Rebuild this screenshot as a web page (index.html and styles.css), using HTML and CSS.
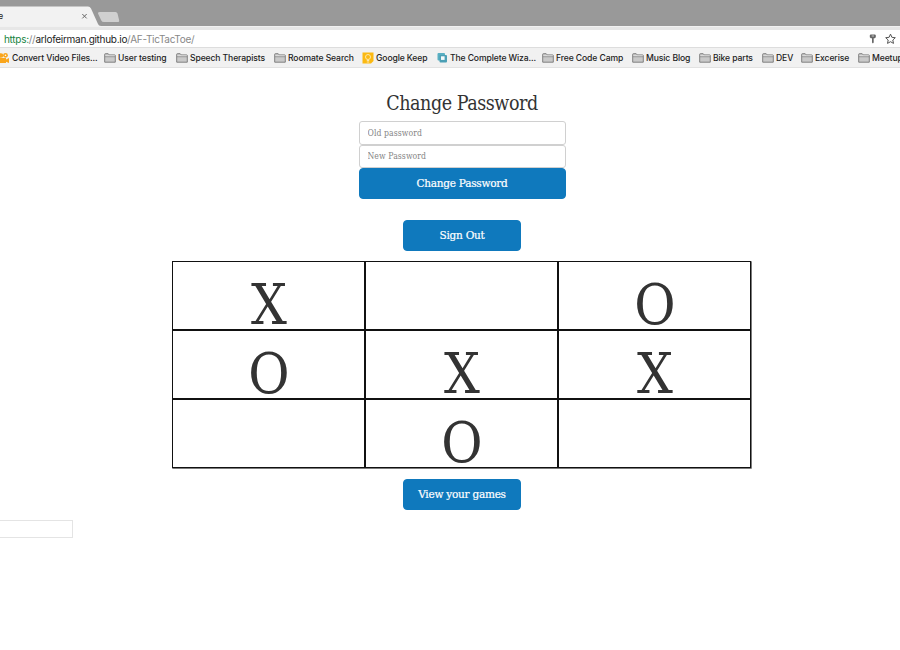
FILE: index.html
```html
<!DOCTYPE html>
<html lang="en">
<head>
<meta charset="utf-8">
<title>Tic Tac Toe</title>
<link rel="stylesheet" href="styles.css">
</head>
<body>
<svg class="defs" width="0" height="0">
  <symbol id="folder" viewBox="0 0 12 10"><path d="M.7 9.2V1.3Q.7.7 1.3.7H4.2L5.2 1.9H10.7Q11.3 1.9 11.3 2.5V9.2Z" fill="#c9c9c9" stroke="#777" stroke-width=".9"/><path d="M.9 3.7H11.1" stroke="#777" stroke-width=".8"/><path d="M1.3 2.8H10.8" stroke="#eee" stroke-width=".7"/></symbol>
</svg>
<header class="browser">
  <div class="tabs">
    <svg width="130" height="26" viewBox="0 0 130 26"><path d="M0 6.5H88Q90 6.5 91 8.5L98 24Q98.600 26 101 26H0Z" fill="#f2f2f2"/><path d="M99.500 12H115.500Q117 12 117.500 13.500L119.200 20.500Q119.500 22 118 22H104Q102 22 101.300 20.500L98 13.500Q97.500 12 99.500 12Z" fill="#d0d0d0"/><path d="M82.300 14L86.700 18.400M86.700 14L82.300 18.400" stroke="#666" stroke-width="1"/></svg>
    <span class="tab-title">e</span>
  </div>
  <div class="address">
    <p class="url"><span class="secure">https:</span><span class="dim">//</span>arlofeirman.github.io<span class="dim">/AF-TicTacToe/</span></p>
    <svg class="tools" width="30" height="14" viewBox="0 0 30 14"><path d="M2.500 2.500H7.100L7.800 3.200V5.300L6.800 6.300H5.700V10.600L4.900 11.400L4 10.600V6.300H2.800L1.800 5.300V3.200Z" fill="#666"/><path d="M3.700 4H6" stroke="#ddd" stroke-width=".8"/><path d="M22.500 2.100L23.900 5.300L27.300 5.700L24.800 8L25.500 11.400L22.500 9.700L19.500 11.400L20.200 8L17.700 5.700L21.100 5.300Z" fill="none" stroke="#555" stroke-width="1"/></svg>
  </div>
  <nav class="bookmarks">
    <a class="first"><svg width="10" height="12" viewBox="0 0 10 12"><circle cx="1" cy="3.500" r="2.300" fill="#f9a51b"/><circle cx="5.500" cy="3.300" r="2.400" fill="#f9a51b"/><path d="M0 6H6V7.500L9 6V11L6 9.700V11H0Z" fill="#f9a51b"/><circle cx="5.500" cy="3.300" r=".8" fill="#fff"/></svg><span>Convert Video Files...</span></a>
    <a><svg width="12" height="10"><use href="#folder"/></svg><span>User testing</span></a>
    <a><svg width="12" height="10"><use href="#folder"/></svg><span>Speech Therapists</span></a>
    <a><svg width="12" height="10"><use href="#folder"/></svg><span>Roomate Search</span></a>
    <a><svg width="12" height="12" viewBox="0 0 12 12"><path d="M.5.500H11.500V9L9 11.500H.5Z" fill="#fbb912"/><circle cx="6" cy="5" r="2.500" fill="none" stroke="#ffe7a5"/><path d="M4.800 8.500H7.200M4.800 10H7.200" stroke="#ffe7a5"/></svg><span>Google Keep</span></a>
    <a><svg width="11" height="12" viewBox="0 0 11 12"><rect x=".5" y="1" width="7.500" height="7.500" rx="1" fill="#58afc2"/><rect x="2.500" y="3" width="7.500" height="7.500" rx="1" fill="#4b9fb5"/><rect x="4" y="4.300" width="3.600" height="3.600" fill="#f4fafb"/></svg><span>The Complete Wiza...</span></a>
    <a><svg width="12" height="10"><use href="#folder"/></svg><span>Free Code Camp</span></a>
    <a><svg width="12" height="10"><use href="#folder"/></svg><span>Music Blog</span></a>
    <a><svg width="12" height="10"><use href="#folder"/></svg><span>Bike parts</span></a>
    <a><svg width="12" height="10"><use href="#folder"/></svg><span>DEV</span></a>
    <a><svg width="12" height="10"><use href="#folder"/></svg><span>Excerise</span></a>
    <a><svg width="12" height="10"><use href="#folder"/></svg><span>Meetup</span></a>
  </nav>
</header>
<main>
  <form class="password-form">
    <h1>Change Password</h1>
    <input type="text" placeholder="Old password">
    <input type="text" placeholder="New Password">
    <button type="button">Change Password</button>
  </form>
  <button type="button" class="sign-out">Sign Out</button>
  <section class="board">
    <div>X</div><div></div><div>O</div>
    <div>O</div><div>X</div><div>X</div>
    <div></div><div>O</div><div></div>
  </section>
  <button type="button" class="games">View your games</button>
</main>
<div class="status"></div>
</body>
</html>
```
FILE: styles.css
```css
* { box-sizing: border-box; }
body { margin: 0; height: 650px; overflow: hidden; background: #fff; color: #333; font-family: "DejaVu Serif Condensed", "DejaVu Serif", serif; font-stretch: condensed; }
.defs { position: absolute; }
.browser { height: 68px; font-family: Inter, "Liberation Sans", sans-serif; background: #f1f1f1; border-bottom: 1px solid #e2e2e2; overflow: hidden; }
.tabs { height: 26px; background: #999; position: relative; }
.tabs svg { display: block; }
.tab-title { position: absolute; left: -2px; top: 10px; font-size: 9px; line-height: 12px; color: #222; }
.address { height: 21px; margin-top: 1px; border-top: 3px solid #e7e7e7; border-bottom: 1px solid #ddd; background: #fff; display: flex; justify-content: space-between; align-items: center; padding: 0 2px 0 4px; }
.url { margin: 0; font-size: 10px; line-height: 16px; letter-spacing: -.29px; color: #222; white-space: nowrap; }
.secure { color: #16843f; }
.dim { color: #888; }
.bookmarks { display: grid; grid-template-columns: 104px 72px 98px 88px 75px 105px 90px 67px 63px 39px 57px 60px; height: 19px; }
.bookmarks a { display: flex; align-items: center; gap: 2px; font-size: 8.6px; font-weight: 500; letter-spacing: -.11px; color: #222; white-space: nowrap; }
.bookmarks svg { flex: none; }
main { display: flex; flex-direction: column; align-items: center; width: 580px; margin-left: 172px; padding-top: 22px; }
.password-form { display: flex; flex-direction: column; width: 207px; }
h1 { margin: 0; height: 31px; font-size: 19.5px; line-height: 28px; letter-spacing: -.45px; font-weight: 400; text-align: center; white-space: nowrap; }
input { height: 23.5px; padding: 0 8px; border: 1px solid #d0d0d0; border-radius: 3px; font: 8.6px "DejaVu Serif Condensed", "DejaVu Serif", serif; font-stretch: condensed; letter-spacing: .08px; background: #fff; }
input::placeholder { color: #858585; opacity: 1; }
button { height: 31px; padding: 0 0 2px; border: 1px solid #0f79bd; border-radius: 4px; background: #0f79bd; color: #fff; font: 11.7px "DejaVu Serif Condensed", "DejaVu Serif", serif; font-stretch: condensed; letter-spacing: -.25px; -webkit-text-stroke: .2px #fff; }
.sign-out, .games { width: 118px; }
.sign-out { margin-top: 21px; }
.board { align-self: flex-start; display: grid; grid-template-columns: 193px 193px 193px; grid-template-rows: 69px 69px 69px; width: 579px; height: 207px; margin-top: 10px; background: #111; box-shadow: .5px .5px 0 .2px #444; }
.board div { margin: 1px; padding-left: 1px; background: #fff; font-size: 56px; line-height: 85px; text-align: center; }
.games { margin-top: 11px; }
.status { width: 73px; height: 18px; margin-top: 10px; border: 1px solid #e4e4e4; border-left: 0; }
```
